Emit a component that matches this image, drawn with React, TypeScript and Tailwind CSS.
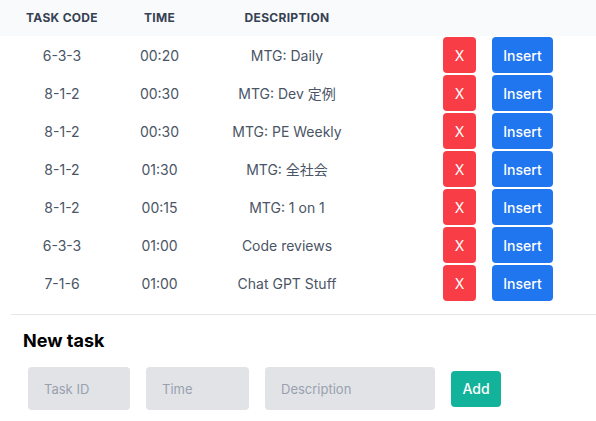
const tasks = [
  { code: '6-3-3', time: '00:20', desc: 'MTG: Daily' },
  { code: '8-1-2', time: '00:30', desc: 'MTG: Dev 定例' },
  { code: '8-1-2', time: '00:30', desc: 'MTG: PE Weekly' },
  { code: '8-1-2', time: '01:30', desc: 'MTG: 全社会' },
  { code: '8-1-2', time: '00:15', desc: 'MTG: 1 on 1' },
  { code: '6-3-3', time: '01:00', desc: 'Code reviews' },
  { code: '7-1-6', time: '01:00', desc: 'Chat GPT Stuff' },
];

export default function App() {
  return (
    <div
      className="w-[596px] h-[421px] bg-white overflow-hidden"
      style={{ fontFamily: 'Inter, "Noto Sans CJK JP", sans-serif' }}
    >
      <div className="flex h-[36px] items-center bg-gray-50 text-[12px] font-bold uppercase text-gray-700 tracking-wide">
        <div className="w-[124px] text-center">Task Code</div>
        <div className="w-[71px] text-center">Time</div>
        <div className="w-[184px] text-center">Description</div>
      </div>
      <div className="flex flex-col">
        {tasks.map((t, i) => (
          <div key={i} className="flex h-[38px] items-center text-[14px] text-gray-600">
            <div className="w-[124px] text-center">{t.code}</div>
            <div className="w-[71px] text-center">{t.time}</div>
            <div className="w-[184px] text-center">{t.desc}</div>
            <div className="ml-[64px] flex gap-4">
              <button className="w-[33px] h-[36px] rounded bg-[#f93d46] text-white text-[14px]">X</button>
              <button className="w-[61px] h-[36px] rounded bg-[#1f76ef] text-white text-[14px] font-medium">Insert</button>
            </div>
          </div>
        ))}
      </div>
      <div className="ml-[11px] mt-[12px] border-t border-gray-200" />
      <div className="px-[23px] pt-[14px]">
        <h2 className="text-[18px] font-bold text-black leading-[24px]">New task</h2>
        <div className="mt-[14px] flex items-center pl-[5px]">
          <input placeholder="Task ID" className="w-[102px] h-[43px] rounded bg-[#e1e3e7] px-4 text-[13px] placeholder:text-gray-400 outline-none" />
          <input placeholder="Time" className="ml-[16px] w-[103px] h-[43px] rounded bg-[#e1e3e7] px-4 text-[13px] placeholder:text-gray-400 outline-none" />
          <input placeholder="Description" className="ml-[16px] w-[170px] h-[43px] rounded bg-[#e1e3e7] px-4 text-[13px] placeholder:text-gray-400 outline-none" />
          <button className="ml-[16px] w-[50px] h-[36px] rounded bg-[#13b39b] text-white text-[14px] font-medium">Add</button>
        </div>
      </div>
    </div>
  );
}
